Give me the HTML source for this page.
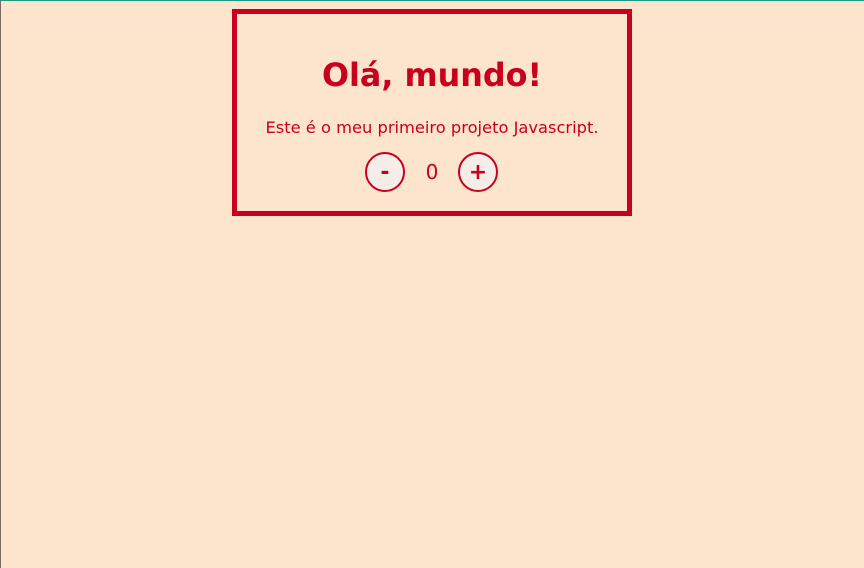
<!DOCTYPE html>
<html><head><style>
html,body{margin:0;padding:0}
body{width:864px;height:568px;background:#fde4cc;border-top:1px solid #1a9a80;box-sizing:border-box;font-family:"DejaVu Sans",Verdana,sans-serif;color:#c8001e;position:relative;overflow:hidden;border-left:1px solid #7a6a60}
.box{position:absolute;left:231px;top:8px;width:390px;height:197px;border:5px solid #c8001e;text-align:center}
h1{position:absolute;left:0;right:0;top:42px;margin:0;font-size:31.8px;font-weight:bold;line-height:40px}
p{position:absolute;left:0;right:0;top:104px;margin:0;font-size:16.3px;line-height:20px}
.b{position:absolute;top:138px;width:36px;height:36px;border:2px solid #c8001e;border-radius:50%;background:#f5ede8;font-size:22px;font-weight:bold;line-height:37px;text-align:center}
.n{position:absolute;top:146px;left:185px;width:20px;font-size:20px;line-height:24px}
</style></head><body>
<div class="box">
<h1>Olá, mundo!</h1>
<p>Este é o meu primeiro projeto Javascript.</p>
<div class="b" style="left:128px">-</div>
<div class="n">0</div>
<div class="b" style="left:221px">+</div>
</div>
</body></html>
